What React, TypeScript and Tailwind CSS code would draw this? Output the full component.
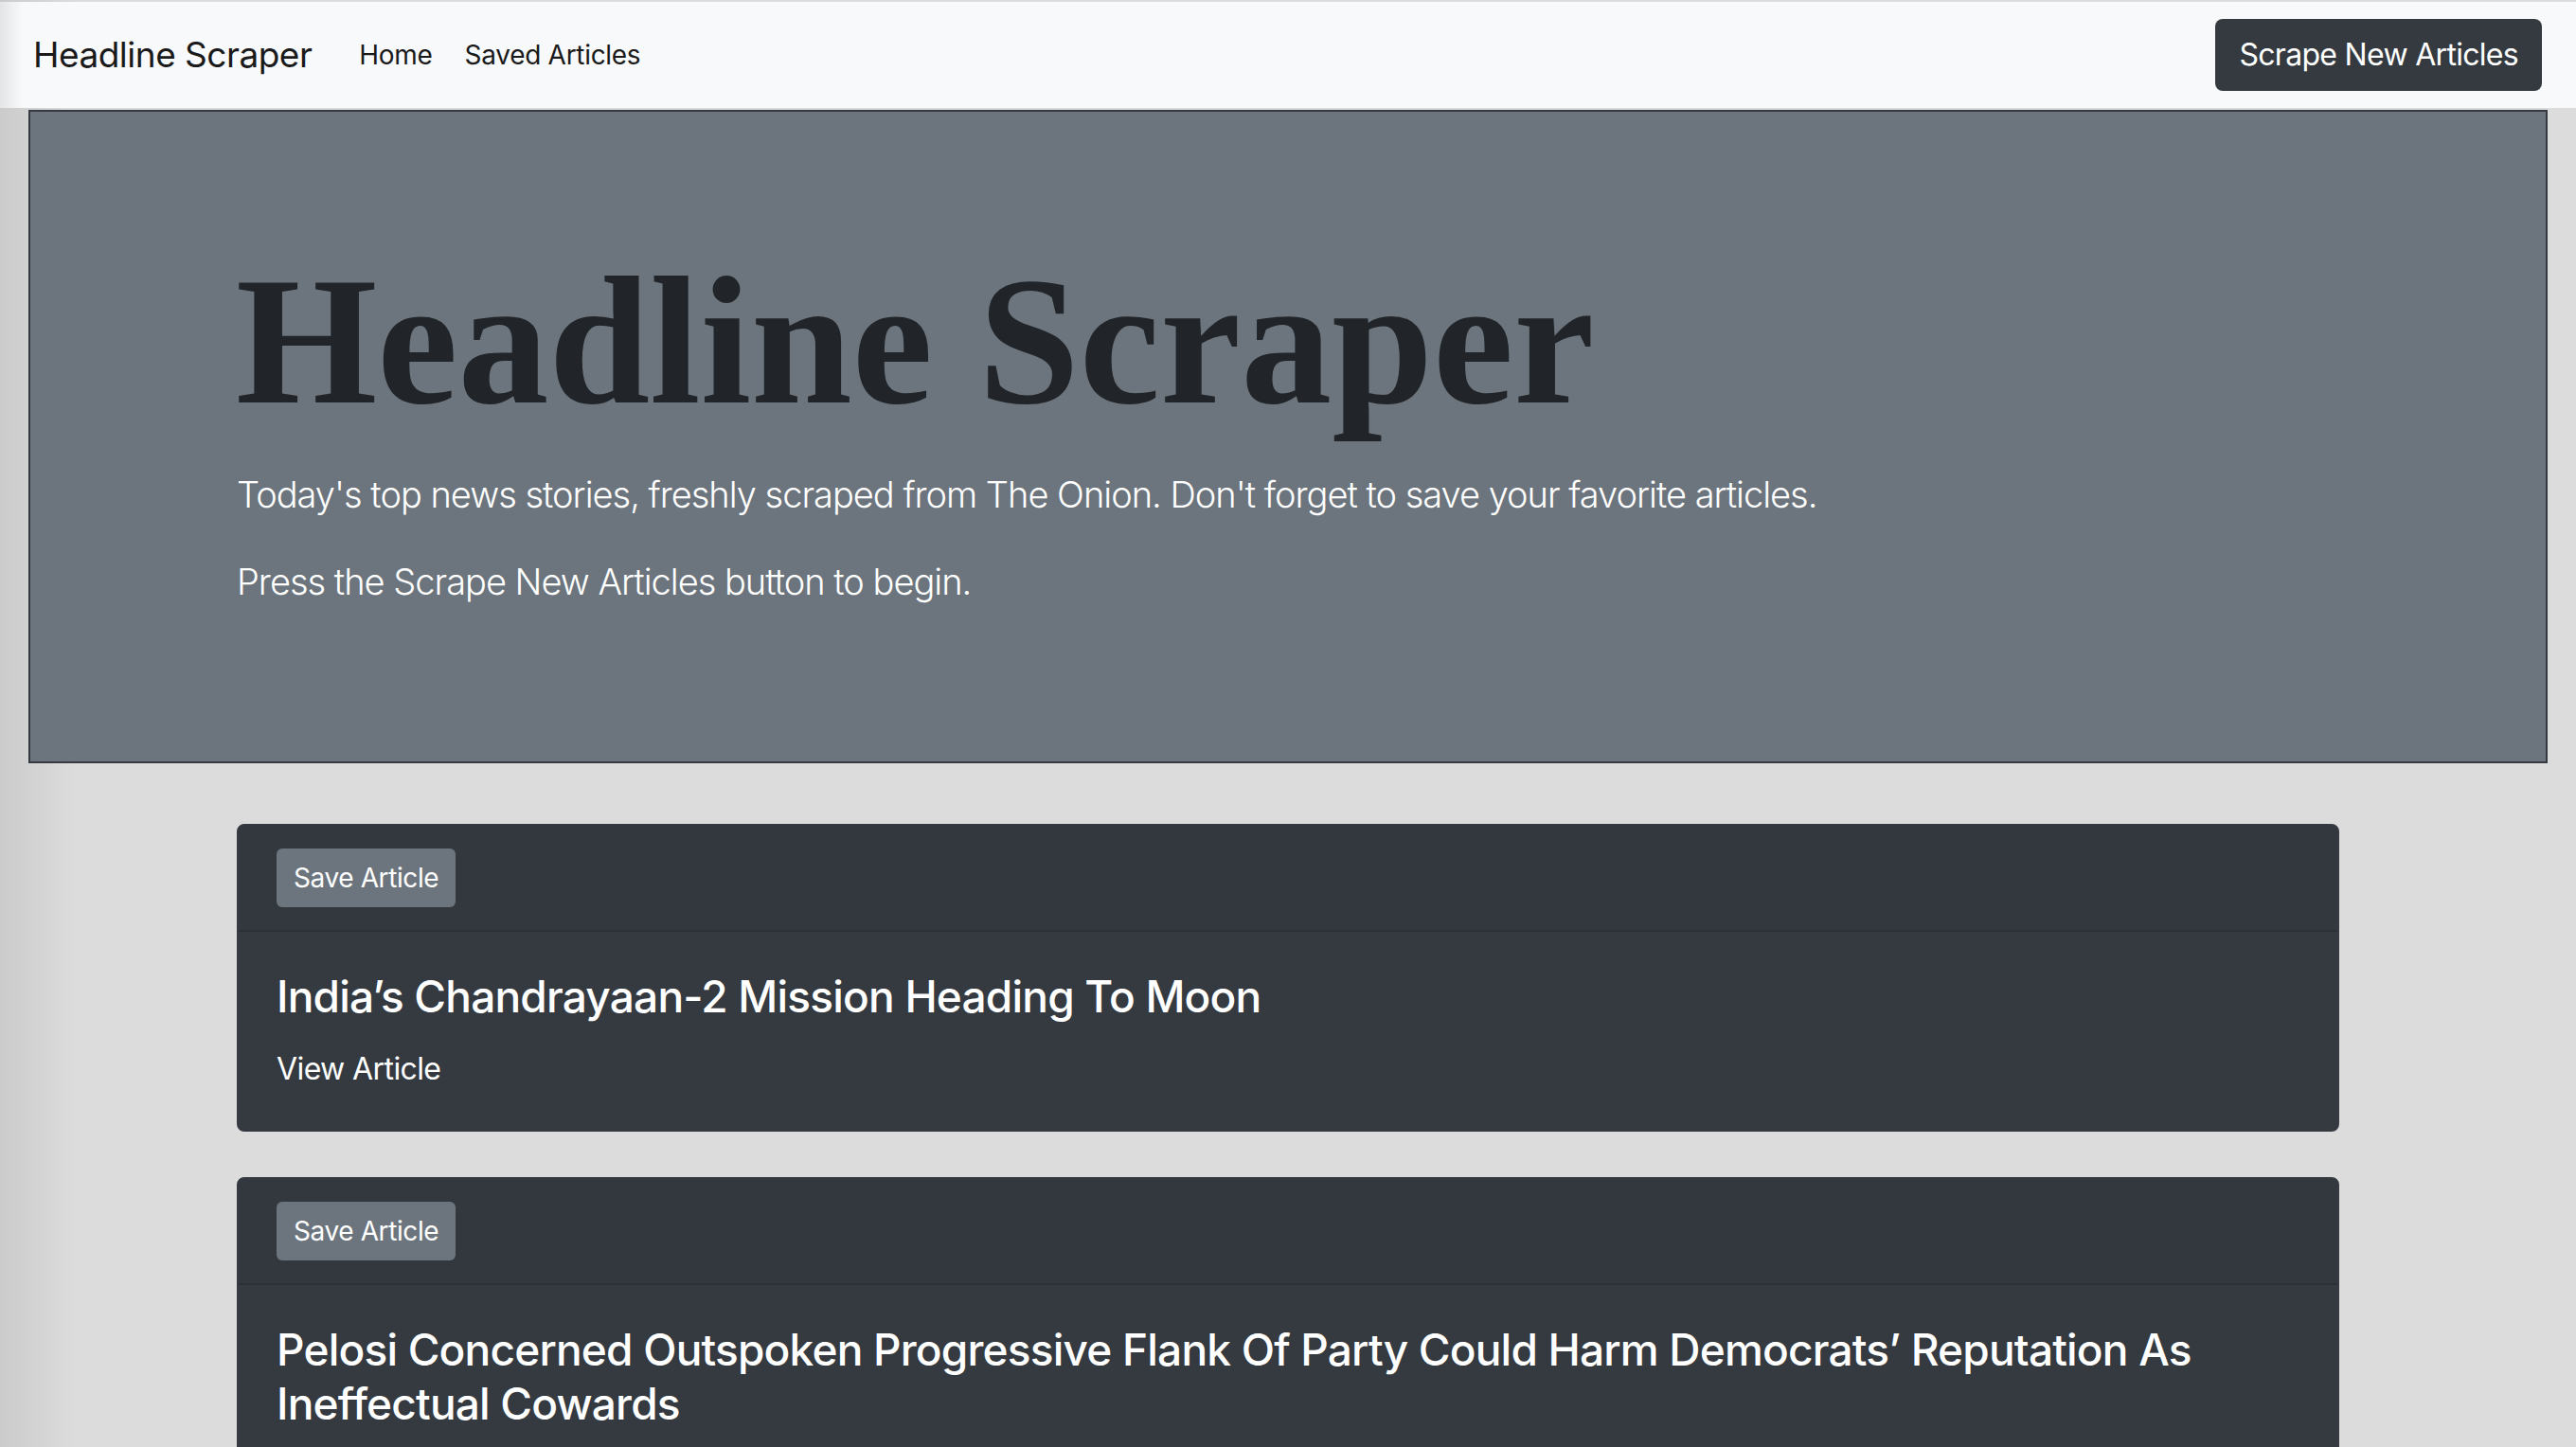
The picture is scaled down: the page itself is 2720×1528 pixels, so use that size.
import React from 'react'

const articles = [
  { id: 1, title: 'India’s Chandrayaan-2 Mission Heading To Moon' },
  { id: 2, title: 'Pelosi Concerned Outspoken Progressive Flank Of Party Could Harm Democrats’ Reputation As Ineffectual Cowards' },
  { id: 3, title: 'Area Man Unsure Whether To Save Article' },
]

const sans = "font-['Inter','Liberation_Sans',sans-serif]"

function Navbar() {
  return (
    <nav className="mt-[2px] h-[112px] flex items-center justify-between pl-[35px] pr-[36px] bg-[linear-gradient(to_right,#e4e5e6_0px,#f8f9fa_24px)]">
      <div className="flex items-center">
        <a className="text-[37px] leading-[60px] text-[#1a1a1a] mr-[50px] tracking-[-0.5px]">Headline Scraper</a>
        <a className="text-[28px] text-[#1a1a1a] mr-[34px] tracking-[-0.3px]">Home</a>
        <a className="text-[28px] text-[#1a1a1a] tracking-[-0.3px]">Saved Articles</a>
      </div>
      <button className="h-[76px] px-[25px] rounded-[8px] bg-[#343a40] text-white text-[32px] tracking-[-0.7px]">
        Scrape New Articles
      </button>
    </nav>
  )
}

function Hero() {
  return (
    <div className="mx-[30px] mt-[2px] border-2 border-[#343a40] bg-[#6c757d] pt-[128px] pb-[128px]">
      <div className="w-[2220px] mx-auto">
        <h1 className="font-['Liberation_Serif',serif] font-bold text-[192px] leading-[1.2] text-[#212529] mb-[16px] -ml-[1px]">
          Headline Scraper
        </h1>
        <p className="text-[38px] leading-[60px] font-light text-white mb-[32px] tracking-[-1px]">
          Today's top news stories, freshly scraped from The Onion. Don't forget to save your favorite articles.
        </p>
        <p className="text-[38px] leading-[60px] font-light text-white mb-[32px] tracking-[-1px]">
          Press the Scrape New Articles button to begin.
        </p>
      </div>
    </div>
  )
}

function ArticleCard({ title }: { title: string }) {
  return (
    <div className="rounded-[8px] border-2 border-[#343a40] bg-[#343a40] text-white overflow-hidden">
      <div className="px-[40px] py-[24px] bg-[#32383e] border-b-2 border-[#2b3035]">
        <button className="h-[62px] px-[18px] rounded-[6px] bg-[#6c757d] text-white text-[28px] tracking-[-0.4px]">
          Save Article
        </button>
      </div>
      <div className="p-[40px]">
        <h4 className="text-[46px] leading-[57px] font-medium mb-[24px] tracking-[-0.8px]">{title}</h4>
        <a className="text-[32px] leading-[48px] tracking-[-0.6px]">View Article</a>
      </div>
    </div>
  )
}

export default function App() {
  return (
    <div className={`${sans} h-[1528px] overflow-hidden bg-[linear-gradient(to_right,#cbcbcb_0px,#dcdcdc_80px)]`}>
      <Navbar />
      <Hero />
      <div className="w-[2220px] mx-auto mt-[64px] flex flex-col gap-[48px]">
        {articles.map(a => (
          <ArticleCard key={a.id} title={a.title} />
        ))}
      </div>
    </div>
  )
}
